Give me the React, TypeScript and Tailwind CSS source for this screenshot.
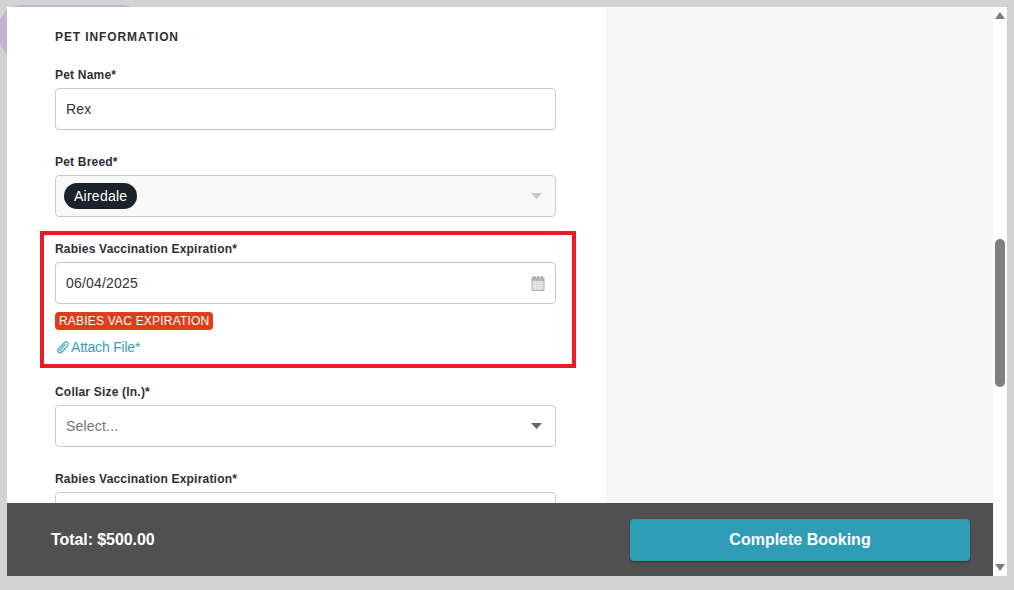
const font = { fontFamily: '"Liberation Sans", Arial, sans-serif' };

function Label({ children }: { children: string }) {
  return <label className="block h-[14px] text-[12px] leading-[14px] font-bold tracking-[0.2px] text-[#2f2f33]">{children}</label>;
}

function Caret({ light }: { light?: boolean }) {
  return (
    <svg width="11" height="6" viewBox="0 0 11 6" className="shrink-0">
      <path d="M0 0H11L5.5 6Z" fill={light ? '#c9c9c9' : '#666666'} />
    </svg>
  );
}

function CalendarIcon() {
  return (
    <svg width="14" height="16" viewBox="0 0 14 16" className="shrink-0">
      <path d="M1 2.5H13V15.5H1Z" fill="#d4d4d4" stroke="#b0b0b0" />
      <path d="M1 5H13" stroke="#a0a0a0" strokeWidth="1.5" />
      <path d="M3.5 1V4M7 1V4M10.500 1V4" stroke="#a0a0a0" strokeWidth="1.4" />
      <path d="M1 8H13M1 10.500H13M1 13H13M4 5V15M7 5V15M10 5V15" stroke="#f0f0f0" strokeWidth="0.7" />
    </svg>
  );
}

function PaperclipIcon() {
  return (
    <svg width="12" height="13" viewBox="0 0 12 13" className="shrink-0" fill="none" stroke="#5fb0c5" strokeWidth="1.5">
      <path d="M10.500 1.500C9.500.6 8.300.7 7.300 1.700L1.800 7.500C.5 8.900.6 10.400 1.500 11.300C2.400 12.200 3.800 12.100 5 10.900L10.300 5.200C11.200 4.200 11.300 2.300 10.500 1.500Z" />
      <path d="M8.500 3.200L3.400 8.700C2.800 9.400 3.600 10.200 4.300 9.500" />
    </svg>
  );
}

export default function App() {
  return (
    <div className="relative h-[590px] w-[1014px] overflow-hidden bg-[#d2d2d2] p-[7px]" style={font}>
      <div className="absolute left-[-2px] top-[5px] h-[65px] w-[145px] rounded-tl-[24px] rounded-tr-[20px] rounded-bl-[40px] bg-[#c0b3d6]" />
      <div className="relative flex h-[569px] w-[1000px] bg-white">
        <div className="flex w-[986px] flex-col pt-px">
          <div className="flex h-[495px] overflow-hidden">
            <div className="w-[599px] overflow-hidden bg-white px-[48px] pt-[22px]">
              <h2 className="h-[14px] text-[12px] leading-[14px] font-bold tracking-[0.9px] text-[#2f2f33]">PET INFORMATION</h2>

              <div className="mt-[24px]">
                <Label>Pet Name*</Label>
              </div>
              <div className="mt-[6px] flex h-[42px] w-[501px] items-center rounded-[4px] border border-[#cccccc] bg-white px-[10px] text-[14px] tracking-[0.2px] text-[#333333]">
                Rex
              </div>

              <div className="mt-[25px]">
                <Label>Pet Breed*</Label>
              </div>
              <div className="mt-[6px] flex h-[42px] w-[501px] items-center justify-between rounded-[4px] border border-[#cccccc] bg-[#f8f8f8] pl-[8px] pr-[13px]">
                <span className="flex h-[26px] items-center rounded-full bg-[#1c222b] px-[10px] text-[14px] tracking-[0.25px] text-white">Airedale</span>
                <Caret light />
              </div>

              <div className="-mx-[15px] mt-[14px] h-[137px] w-[536px] border-4 border-[#e81c24] px-[11px] pt-[7px]">
                <Label>Rabies Vaccination Expiration*</Label>
                <div className="mt-[6px] flex h-[42px] w-[501px] items-center justify-between rounded-[4px] border border-[#cccccc] bg-white pl-[10px] pr-[10px] text-[14px] tracking-[0.2px] text-[#333333]">
                  06/04/2025
                  <CalendarIcon />
                </div>
                <div className="mt-[8px] flex h-[18px] w-fit items-center rounded-[4px] bg-[#e03e1a] px-[4px] text-[12px] tracking-[0.2px] text-white">
                  RABIES VAC EXPIRATION
                </div>
                <div className="mt-[8px] flex h-[18px] items-center gap-[2px] pl-[2px] text-[14px] tracking-[-0.2px] text-[#3a9fb8]">
                  <PaperclipIcon />
                  Attach File*
                </div>
              </div>

              <div className="mt-[17px]">
                <Label>Collar Size (In.)*</Label>
              </div>
              <div className="mt-[6px] flex h-[42px] w-[501px] items-center justify-between rounded-[4px] border border-[#cccccc] bg-white pl-[10px] pr-[13px] text-[14px] tracking-[0.2px] text-[#757575]">
                Select...
                <Caret />
              </div>

              <div className="mt-[25px]">
                <Label>Rabies Vaccination Expiration*</Label>
              </div>
              <div className="mt-[6px] h-[42px] w-[501px] shrink-0 rounded-[4px] border border-[#cccccc] bg-white" />
            </div>
            <div className="flex-1 bg-[#f7f7f7]" />
          </div>
          <div className="flex h-[73px] items-center justify-between bg-[#505050] pl-[44px] pr-[23px]">
            <span className="text-[16px] font-bold tracking-[-0.08px] text-white">Total: $500.00</span>
            <button className="h-[42px] w-[340px] rounded-[4px] bg-[#2f9db6] text-[16px] font-bold text-white shadow-[0_1px_2px_rgba(0,0,0,0.4)]">
              Complete Booking
            </button>
          </div>
        </div>
        <div className="flex w-[14px] flex-col items-center bg-[#fdfdfd]">
          <svg width="10" height="7" viewBox="0 0 10 7" className="mt-[5px] shrink-0">
            <path d="M5 0L10 7H0Z" fill="#7c7c7c" />
          </svg>
          <div className="mt-[220px] h-[148px] w-[10px] rounded-[5px] bg-[#808080]" />
          <svg width="10" height="7" viewBox="0 0 10 7" className="mt-[177px] shrink-0">
            <path d="M0 0H10L5 7Z" fill="#7c7c7c" />
          </svg>
        </div>
      </div>
    </div>
  );
}
